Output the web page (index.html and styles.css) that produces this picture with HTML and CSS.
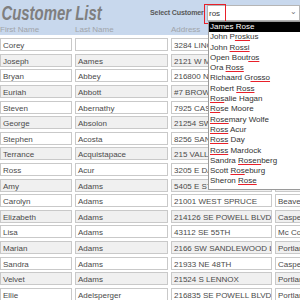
FILE: index.html
```html
<!DOCTYPE html>
<html lang="en">
  <head>
    <meta charset="UTF-8" />
    <title>Customer List</title>
    <link rel="stylesheet" href="styles.css">
  </head>
  <body>
    <div class="form">
      <div class="head">
        <div class="top">
          <h1>Customer List</h1>
          <div class="select">
            <span class="select-label">Select Customer</span>
            <div class="combo">
              <span class="typed">ros</span>
              <span class="arrow">&#8964;</span>
            </div>
          </div>
        </div>
        <div class="labels">
          <span>First Name</span>
          <span>Last Name</span>
          <span>Address</span>
          <span></span>
        </div>
      </div>

      <div class="rows">
        <div class="row"><span>Corey</span><span></span><span>3284 LINCOLN ST</span><span>Portland</span></div>
        <div class="row alt"><span>Joseph</span><span>Aames</span><span>2121 W MAIN ST</span><span>Portland</span></div>
        <div class="row"><span>Bryan</span><span>Abbey</span><span>216800 NE HALSEY</span><span>Portland</span></div>
        <div class="row alt"><span>Euriah</span><span>Abbott</span><span>#7 BROWING RD</span><span>Casper</span></div>
        <div class="row"><span>Steven</span><span>Abernathy</span><span>7925 CASCADE</span><span>Portland</span></div>
        <div class="row alt"><span>George</span><span>Absolon</span><span>21254 SW 2ND</span><span>Portland</span></div>
        <div class="row"><span>Stephen</span><span>Acosta</span><span>8256 SANDY BLVD</span><span>Portland</span></div>
        <div class="row alt"><span>Terrance</span><span>Acquistapace</span><span>215 VALLEY VIEW</span><span>Casper</span></div>
        <div class="row"><span>Ross</span><span>Acur</span><span>3205 E DAVIS</span><span>Portland</span></div>
        <div class="row alt"><span>Amy</span><span>Adams</span><span>5405 E STRATTON</span><span>Portland</span></div>
        <div class="row"><span>Carolyn</span><span>Adams</span><span>21001 WEST SPRUCE</span><span>Beaverton</span></div>
        <div class="row alt"><span>Elizabeth</span><span>Adams</span><span>214126 SE POWELL BLVD</span><span>Casper</span></div>
        <div class="row"><span>Lisa</span><span>Adams</span><span>43112 SE 55TH</span><span>Mc Cook</span></div>
        <div class="row alt"><span>Marian</span><span>Adams</span><span>2166 SW SANDLEWOOD LP</span><span>Portland</span></div>
        <div class="row"><span>Sandra</span><span>Adams</span><span>21933 NE 48TH</span><span>Casper</span></div>
        <div class="row alt"><span>Velvet</span><span>Adams</span><span>21524 S LENNOX</span><span>Portland</span></div>
        <div class="row"><span>Ellie</span><span>Adelsperger</span><span>216835 SE POWELL BLVD</span><span>Portland</span></div>
      </div>

      <ul class="dropdown">
        <li class="current">James Rose</li>
        <li>John P<u>rosk</u>us</li>
        <li>John <u>Rossi</u></li>
        <li>Open Bout<u>ros</u></li>
        <li>Ora <u>Ross</u></li>
        <li>Richaard G<u>rosso</u></li>
        <li>Robert <u>Ross</u></li>
        <li><u>Ros</u>alie Hagan</li>
        <li><u>Ro</u>se Moore</li>
        <li><u>Rose</u>mary Wolfe</li>
        <li><u>Ross</u> Acur</li>
        <li><u>Ross</u> Day</li>
        <li><u>Ross</u> Mardock</li>
        <li>Sandra <u>Rosen</u>berg</li>
        <li>Scott <u>Ros</u>eburg</li>
        <li>Sheron <u>Rose</u></li>
      </ul>
    </div>
  </body>
</html>
```

FILE: styles.css
```css
body {
    margin: 0;
    font-family: "Liberation Sans", Arial, sans-serif;
    font-size: 8px;
    color: #4a4a4a;
    background-color: #fff;
}
.form {
    position: relative;
    width: 300px;
    height: 300px;
    overflow: hidden;
}
.head {
    background-color: #c8d8ed;
    height: 35px;
}
.top {
    display: flex;
    align-items: flex-start;
    height: 24px;
}
h1 {
    margin: 0;
    padding: 1px 0 0 2px;
    width: 148px;
    font-size: 21px;
    font-style: italic;
    font-weight: bold;
    color: #7f7f7f;
    white-space: nowrap;
    transform: scaleX(0.71);
    transform-origin: left top;
}
.select {
    display: flex;
    align-items: center;
    margin-top: 5px;
}
.select-label {
    font-weight: bold;
    font-size: 7.1px;
    color: #595959;
    width: 57px;
    white-space: nowrap;
    letter-spacing: -0.15px;
}
.combo {
    position: relative;
    width: 93px;
    height: 16px;
    background-color: #fff;
    border: 1px solid #b5b5b5;
    display: flex;
    align-items: center;
    justify-content: space-between;
    box-sizing: border-box;
}
.typed {
    padding-left: 1px;
    color: #333;
}
.typed::before {
    content: "";
    position: absolute;
    left: -4px;
    top: -2px;
    width: 20px;
    height: 18px;
    border: 1px solid #e8202a;
}
.arrow {
    color: #777;
    font-size: 8px;
    padding-right: 2px;
    margin-top: -4px;
}
.labels {
    display: grid;
    grid-template-columns: 75px 96px 104px 25px;
    color: #a0a4aa;
    padding-top: 1px;
}
.rows {
    padding-top: 2px;
}
.row {
    display: grid;
    grid-template-columns: 72px 93px 101px 40px;
    column-gap: 3px;
    height: 15.6px;
    align-items: center;
}
.row span {
    display: block;
    height: 13px;
    line-height: 13px;
    border: 1px solid #c9c9c9;
    box-sizing: border-box;
    padding-left: 2px;
    white-space: nowrap;
    overflow: hidden;
    background-color: #fff;
}
.row.alt span {
    background-color: #f0f0f0;
}
.dropdown {
    position: absolute;
    left: 208px;
    top: 21px;
    width: 95px;
    margin: 0;
    padding: 0 0 2px 0;
    list-style: none;
    background-color: #fff;
    border: 1px solid #9a9a9a;
    color: #333;
}
.dropdown li {
    height: 10.3px;
    line-height: 10.3px;
    padding-left: 1px;
    white-space: nowrap;
}
.dropdown li.current {
    background-color: #000;
    color: #fff;
}
.dropdown u {
    text-decoration: underline;
    text-decoration-color: #e8202a;
    text-underline-offset: 1px;
}
```
